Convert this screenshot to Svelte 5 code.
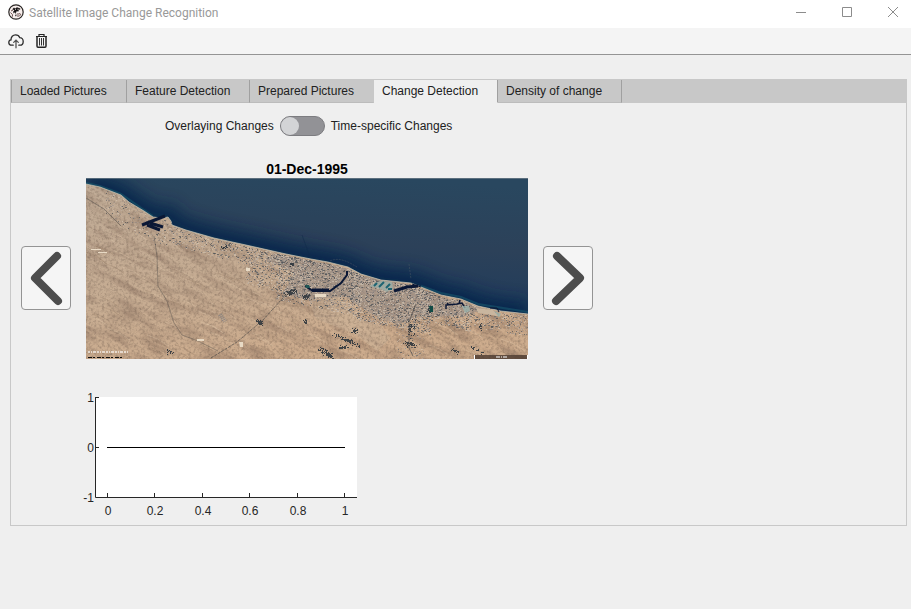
<script>
  const tabs = ['Loaded Pictures', 'Feature Detection', 'Prepared Pictures', 'Change Detection', 'Density of change'];
  let active = $state(3);
  let timeSpecific = $state(false);

  const xTicks = [0, 0.2, 0.4, 0.6, 0.8, 1];
  const yTicks = [1, 0, -1];

  // Shoreline of the scene, west to east
  const coast = [
    [0, 6], [14, 9], [35, 17], [43, 24], [58, 33], [67, 39], [76, 40], [82, 39], [85, 43], [86, 47], [100, 52],
    [128, 60], [160, 67], [200, 76], [225, 81], [242, 84], [262, 89], [275, 96], [295, 102],
    [325, 105], [335, 109], [355, 117], [375, 121], [392, 128], [415, 133], [442, 136]
  ];
  const coastPath = 'M' + coast.map((p) => p.join(' ')).join('L');
  const landPath = coastPath + 'L442 181L0 181Z';

  function coastY(x) {
    for (let i = 1; i < coast.length; i++) {
      const [x0, y0] = coast[i - 1];
      const [x1, y1] = coast[i];
      if (x <= x1) return y0 + ((x - x0) / (x1 - x0)) * (y1 - y0);
    }
    return 136;
  }

  let seed = 1995;
  function rand() {
    seed = (seed * 16807) % 2147483647;
    return seed / 2147483647;
  }

  // from x, to x, depth inland, number of pixels
  const towns = [
    [20, 84, 26, 160], [85, 190, 17, 420], [160, 225, 38, 700], [190, 275, 46, 1500],
    [262, 345, 44, 1700], [335, 385, 28, 650], [380, 442, 20, 300], [310, 338, 76, 200]
  ];
  const inks = ['#5e6268', '#8d8480', '#a0968d', '#d6c8b6', '#3c444c', '#c0b1a3'];
  const specks = inks.map(() => '');
  for (const [x0, x1, depth, count] of towns) {
    for (let i = 0; i < count; i++) {
      const x = Math.floor(x0 + rand() * (x1 - x0));
      const y = Math.floor(coastY(x) + 2 + depth * Math.pow(rand(), 1.25));
      const w = rand() > 0.75 ? 2 : 1;
      specks[Math.floor(rand() * inks.length)] += `M${x} ${y}h${w}v1h-${w}z`;
    }
  }

  // Dark farmland patches: centre x, centre y, half width, half height, slope, count
  const farms = [
    [173, 144, 4, 3, 0.5, 45], [219, 143, 3, 3, 0, 14], [261, 162, 16, 3, 0.4, 90], [240, 175, 9, 4, 0.6, 80],
    [257, 169, 6, 2, 0, 30], [268, 152, 4, 4, 0, 24], [323, 166, 8, 3, 0, 45], [325, 150, 5, 12, 0, 40],
    [369, 173, 5, 3, 0.4, 20], [391, 172, 10, 2, 0.5, 20], [220, 118, 6, 3, 0, 40], [205, 114, 8, 3, -0.2, 50],
    [344, 131, 3, 4, 0, 40], [394, 148, 2, 5, 0.5, 12], [83, 174, 4, 3, 0.4, 12], [206, 86, 3, 2, 0, 20], [137, 69, 4, 2, 0, 20]
  ];
  let farmPath = '';
  for (const [cx, cy, rx, ry, slope, count] of farms) {
    for (let i = 0; i < count; i++) {
      const dx = (rand() + rand() - 1) * rx;
      const dy = (rand() + rand() - 1) * ry + dx * slope;
      farmPath += `M${Math.round(cx + dx)} ${Math.round(cy + dy)}h1v1h-1z`;
    }
  }

  // Wind-blown ridges running south-east
  let darkRidges = '';
  let lightRidges = '';
  for (let i = 0; i < 190; i++) {
    const x = Math.round(rand() * 440);
    const y = Math.round(coastY(x) + 22 + rand() * 135);
    const l = 6 + Math.round(rand() * 18);
    const d = `M${x} ${y}q${Math.round(l / 2)} ${Math.round(l / 8)} ${l} ${Math.round(l * 0.5)}`;
    if (i % 2) darkRidges += d;
    else lightRidges += d;
  }
</script>

<div class="window">
  <header class="titlebar">
    <svg class="logo" viewBox="0 0 16 16" width="16" height="16" aria-hidden="true">
      <circle cx="8" cy="8" r="7.2" fill="#f8efed" stroke="#292523" stroke-width="1.2" />
      <path d="M4.300 5.200 6 3.600l1 1L9 3.200l3.300 1.300-.2 1.300-1.600-.2.300 1.700-1 .8-1-1.200-.9 2 .6 2.500L8 12.600l-.9-.8.800-1.600-.9-2-1.500 1.200-.3-1.800 1.200-1.300z" fill="#171313" />
      <path d="M2.500 8.500 4.600 10.800l-.4 2M11 9.500l1.800.8-1.500 2M5 6 3 7M10 9v4" fill="none" stroke="#6c5250" stroke-width="1" />
      <path d="M7 5.300h1M10 4.800v1M9 8h2" stroke="#fff" stroke-width=".8" />
    </svg>
    <span class="caption">Satellite Image Change Recognition</span>
    <div class="controls">
      <button aria-label="Minimize"><svg width="12" height="12" viewBox="0 0 12 12"><path d="M1 6.500h10" /></svg></button>
      <button aria-label="Maximize"><svg width="12" height="12" viewBox="0 0 12 12"><path d="M1.500 1.500h9v9h-9z" /></svg></button>
      <button aria-label="Close"><svg width="12" height="12" viewBox="0 0 12 12"><path d="m1 1 10 10M11 1 1 11" /></svg></button>
    </div>
  </header>

  <div class="toolbar" role="toolbar" aria-label="Pictures">
    <button aria-label="Load pictures">
      <svg width="16" height="16" viewBox="0 0 16 16" fill="none" stroke="#2b2b2b" stroke-width="1.3" stroke-linecap="round">
        <path d="M5.200 12.200H3.700C1.900 12.200.8 11 .8 9.500c0-1.400.9-2.400 2.200-2.600C2.800 4 5 1.800 7.500 1.800c2 0 3.600 1 4.200 2.800 2 0 3.500 1.700 3.500 3.800s-1.400 3.800-3.200 3.800h-1.200" />
        <path d="M8 14.800V7.300M5.700 9.400 8 7.100l2.300 2.300" stroke="#555" />
      </svg>
    </button>
    <button aria-label="Delete pictures">
      <svg width="16" height="16" viewBox="0 0 16 16" fill="none" stroke="#242424">
        <path d="M2 3.500h11M5 3V1.500h5V3" stroke-width="1.200" />
        <path d="M3 4v9c0 .8.300 1.300 1 1.300h7c.7 0 1-.5 1-1.300V4" stroke-width="1.500" />
        <path d="M5.500 5v7.500M7.500 5v7.500M9.500 5v7.500" stroke="#333" />
      </svg>
    </button>
  </div>

  <main class="panel">
    <div class="tabs" role="tablist">
      {#each tabs as tab, i}
        <button role="tab" class="tab" class:active={active === i} aria-selected={active === i} onclick={() => (active = i)}>{tab}</button>
      {/each}
    </div>

    <div class="content" role="tabpanel">
      <label class="mode">
        <span>Overlaying Changes</span>
        <input type="checkbox" role="switch" bind:checked={timeSpecific} />
        <span>Time-specific Changes</span>
      </label>

      <div class="viewer">
        <button class="step" aria-label="Previous picture">
          <svg width="48" height="62" viewBox="0 0 48 62"><path d="M35 9 13 31 36 54" /></svg>
        </button>
        <figure>
          <figcaption>01-Dec-1995</figcaption>
          <svg class="scene" viewBox="0 0 442 181" role="img" aria-label="Satellite picture of the coast">
            <defs>
              <linearGradient id="sea" x1="0.62" y1="0" x2="0.48" y2="1">
                <stop offset="0" stop-color="#29475f" />
                <stop offset="0.35" stop-color="#2c4159" />
                <stop offset="0.6" stop-color="#233d5b" />
                <stop offset="1" stop-color="#0d2c50" />
              </linearGradient>
              <linearGradient id="sand" x1="0" y1="0" x2="0.4" y2="1">
                <stop offset="0" stop-color="#bfab96" />
                <stop offset="0.6" stop-color="#c6ac92" />
                <stop offset="1" stop-color="#cdac8d" />
              </linearGradient>
              <filter id="grain" x="0" y="0" width="100%" height="100%" color-interpolation-filters="sRGB">
                <feTurbulence type="fractalNoise" baseFrequency="0.37" numOctaves="3" seed="4" />
                <feColorMatrix values="0 0 0 0 0.42  0 0 0 0 0.35  0 0 0 0 0.3  1.6 0 0 0 -0.7" />
              </filter>
              <filter id="dunes" x="0" y="0" width="100%" height="100%" color-interpolation-filters="sRGB">
                <feTurbulence type="fractalNoise" baseFrequency="0.03 0.13" numOctaves="5" seed="9" />
                <feColorMatrix values="0 0 0 0 0.5  0 0 0 0 0.4  0 0 0 0 0.34  1.8 0 0 0 -0.75" />
              </filter>
              <filter id="soft" x="-10%" y="-20%" width="120%" height="140%"><feGaussianBlur stdDeviation="8" /></filter>
              <clipPath id="land"><path d={landPath} /></clipPath>
            </defs>
            <rect width="442" height="181" fill="url(#sea)" />
            <path d={coastPath} fill="none" stroke="#052449" stroke-width="24" opacity=".8" filter="url(#soft)" />
            <path d="M0 5 14 8 35 16 58 32 67 38M335 108 355 115 375 119 392 126 442 134" fill="none" stroke="#1d6678" stroke-width="2" opacity=".45" />
            <path d={landPath} fill="url(#sand)" />
            <g clip-path="url(#land)">
              <g transform="rotate(27 221 90)"><rect x="-60" y="-120" width="570" height="430" filter="url(#dunes)" opacity=".6" /></g>
              <path d={darkRidges} fill="none" stroke="#957a65" opacity=".3" />
              <path d={lightRidges} fill="none" stroke="#e2cab0" opacity=".35" />
              <path d="M188 76 242 86 262 91 275 98 325 107 355 119 400 131 376 138 332 139 312 147 284 135 260 119 220 122 198 115 208 94 180 82z" fill="#9b918b" opacity=".6" />
              <path d="M222 120 255 119 271 139 292 145 305 160 291 173 269 156 230 141z" fill="#ccb499" opacity=".5" />
              <rect width="442" height="181" filter="url(#grain)" opacity=".6" />
            </g>
            <path d={coastPath} fill="none" stroke="#d0cfbf" stroke-width="1" opacity=".65" />
            {#each specks as d, i}<path {d} fill={inks[i]} opacity=".6" />{/each}
            <path d={farmPath} fill="#28313a" opacity=".85" />
            <g fill="none" stroke="#4f4b48" stroke-width="1" opacity=".7">
              <path d="M125 180 151 164 177 142 196 121 211 109" stroke-dasharray="3 1" />
              <path d="M68 58 71 78 72 108 81 123 88 145 96 157 112 163 132 173" opacity=".6" />
              <path d="M0 20 18 31 35 48" opacity=".7" />
              <path d="M330 126 323 144 323 170 327 178" />
              <path d="M346 150 357 142 369 155M228 120v18h26" opacity=".3" />
            </g>
            <g fill="none" stroke="#0a1735">
              <path d="M56 47 79 38M64 45 77 49M61 47 74 52" stroke-width="3" />
              <path d="M219 108 227 113 244 113 255 105 261 97V93" stroke-width="2" />
              <path d="M226 112h17" stroke-width="3" />
              <path d="M308 113 321 109 332 108" stroke-width="3" />
              <path d="M360 131v-4l11-1 5-1 3 5M373 126l1-4M363 127l-2-2" stroke-width="1.500" />
              <path d="M404 130h7l2 4M326 106l9 3" stroke-width="1" />
            </g>
            <path d="M283 108 294 103 306 104 307 110 301 114 295 111z" fill="#9da9a1" />
            <path d="m288 108 3-3M293 109l5-5M300 110l4-4M302 111h4" stroke="#1e6472" stroke-width="2" />
            <path d="M376 128h7l1 5-5 2zM408 133l7 3-2 3-6-3z" fill="#9ab2ab" opacity=".8" />
            <path d="M390 130 407 132 412 138 392 135z" fill="#c9b69f" />
            <path d="M343 128h4v6h-3z" fill="#124b45" />
            <path d="M219 107h4l1 3h-4z" fill="#205654" />
            <path d="M153 164h4v5h-3zM111 161h7v2h-7zM160 90h4v3h-4zM229 116h11v3h-11zM5 71h10v1H5zM12 74h9v1h-9z" fill="#e8dac5" />
            <path d="m133 137 5 7M135 136l5 7" stroke="#8a8480" stroke-width="2" stroke-dasharray="1 1" />
            <path d="M244 83q8-4 20 2l7 4M323 86l2 15" fill="none" stroke="#3d4f60" stroke-width="1" stroke-dasharray="2 1" opacity=".7" />
            <path d="M216 57 224 79" stroke="#102b4b" opacity=".5" />
            <path d="M2 174h41" stroke="#eee7df" stroke-width="2" stroke-dasharray="2 1 1 1 3 1" opacity=".8" />
            <path d="M2 179.500h36" stroke="#0e0e0e" stroke-width="1" stroke-dasharray="4 1 2 2" />
            <path d="M388 177h54v4h-54z" fill="#4b3a30" opacity=".8" />
            <path d="M388.500 177v4M441.500 177v4M410 179h12" stroke="#fff" stroke-dasharray="4 1 1 1" />
            <path d="M0 .5h442" stroke="#7e8b93" opacity=".6" />
          </svg>
        </figure>
        <button class="step" aria-label="Next picture">
          <svg width="48" height="62" viewBox="0 0 48 62"><path d="M13 9 36 31 12 54" /></svg>
        </button>
      </div>

      <svg class="chart" width="280" height="130" viewBox="0 0 280 130" role="img" aria-label="Change over time">
        <rect x="15" y="7" width="261" height="101" fill="#fff" />
        <g fill="none" stroke="#262626">
          <path d="M14.500 7v100.500H276" />
          {#each yTicks as t, i}<path d="M15 {7.5 + i * 50}h3" />{/each}
          {#each xTicks as t}<path d="M{Math.round(26 + t * 237) + 0.5} 107v-4" />{/each}
        </g>
        <path d="M26 57.500h238" stroke="#000" />
        {#each yTicks as t, i}<text x="13" y={12 + i * 50} text-anchor="end">{t}</text>{/each}
        {#each xTicks as t}<text x={Math.round(27 + t * 237)} y="125" text-anchor="middle">{t}</text>{/each}
      </svg>
    </div>
  </main>
</div>

<style>
  :global(body) {
    background: #efefef;
  }
  .window {
    font: 12px/16px "Liberation Sans", Arial, sans-serif;
    color: #212121;
  }
  button {
    font: inherit;
    color: inherit;
    padding: 0;
    border: 0;
    background: none;
  }
  svg {
    display: block;
  }
  .titlebar {
    display: flex;
    align-items: center;
    height: 28px;
    padding: 0 0 4px 8px;
    box-sizing: border-box;
    background: #fff;
  }
  .caption {
    margin-left: 5px;
    padding-top: 2px;
    font-family: Roboto, "Noto Sans", sans-serif;
    color: #999;
  }
  .controls {
    display: flex;
    margin-left: auto;
  }
  .controls button {
    display: grid;
    place-items: center;
    width: 46px;
    height: 24px;
  }
  .controls button:last-child {
    width: 36px;
    margin-left: 5px;
  }
  .controls path {
    fill: none;
    stroke: #8c8c8c;
  }
  .toolbar {
    display: flex;
    align-items: center;
    gap: 10px;
    height: 26px;
    padding: 0 8px;
    background: #f4f4f4;
    border-bottom: 1px solid #949494;
  }
  .panel {
    margin: 24px 4px 0 10px;
    border: 1px solid #c8c8c8;
  }
  .tabs {
    display: flex;
    height: 23px;
    background: #c8c8c8;
  }
  .tab {
    width: 124px;
    padding: 0 8px;
    box-sizing: border-box;
    text-align: left;
    border-right: 1px solid #a0a0a0;
    border-bottom: 1px solid #bcbcbc;
  }
  .tab:first-child {
    width: 116px;
    border-left: 1px solid #a0a0a0;
  }
  .tab:nth-child(2) {
    width: 123px;
  }
  .tab:nth-child(3) {
    border-right-color: #c8c8c8;
  }
  .tab.active {
    background: #efefef;
    border-bottom-color: #efefef;
  }
  .content {
    padding: 13px 10px 5px;
  }
  .mode {
    display: flex;
    align-items: center;
    gap: 6px;
    width: max-content;
    margin-left: 144px;
  }
  .mode input {
    appearance: none;
    display: flex;
    width: 45px;
    height: 20px;
    margin: 0;
    border: 1px solid #7c7c80;
    border-radius: 10px;
    background: #929296;
  }
  .mode input::before {
    content: "";
    width: 18px;
    height: 18px;
    border-radius: 50%;
    background: #d3d4d6;
  }
  .mode input:checked {
    justify-content: flex-end;
  }
  .viewer {
    display: flex;
    align-items: flex-end;
    gap: 15px;
    margin-top: 24px;
  }
  .step {
    flex: none;
    display: grid;
    place-items: center;
    width: 50px;
    height: 64px;
    margin-bottom: 49px;
    box-sizing: border-box;
    border: 1px solid #949494;
    border-radius: 4px;
    background: #f5f5f5;
  }
  .step path {
    fill: none;
    stroke: #4d4d4d;
    stroke-width: 8;
    stroke-linecap: round;
    stroke-linejoin: round;
  }
  figure {
    flex: 0 1 442px;
    margin: 0;
  }
  figcaption {
    font-size: 14px;
    line-height: 18px;
    font-weight: bold;
    text-align: center;
    color: #000;
  }
  .scene {
    width: 100%;
    height: auto;
  }
  .chart {
    margin: 31px 0 0 60px;
  }
  .chart text {
    fill: #262626;
  }
</style>
